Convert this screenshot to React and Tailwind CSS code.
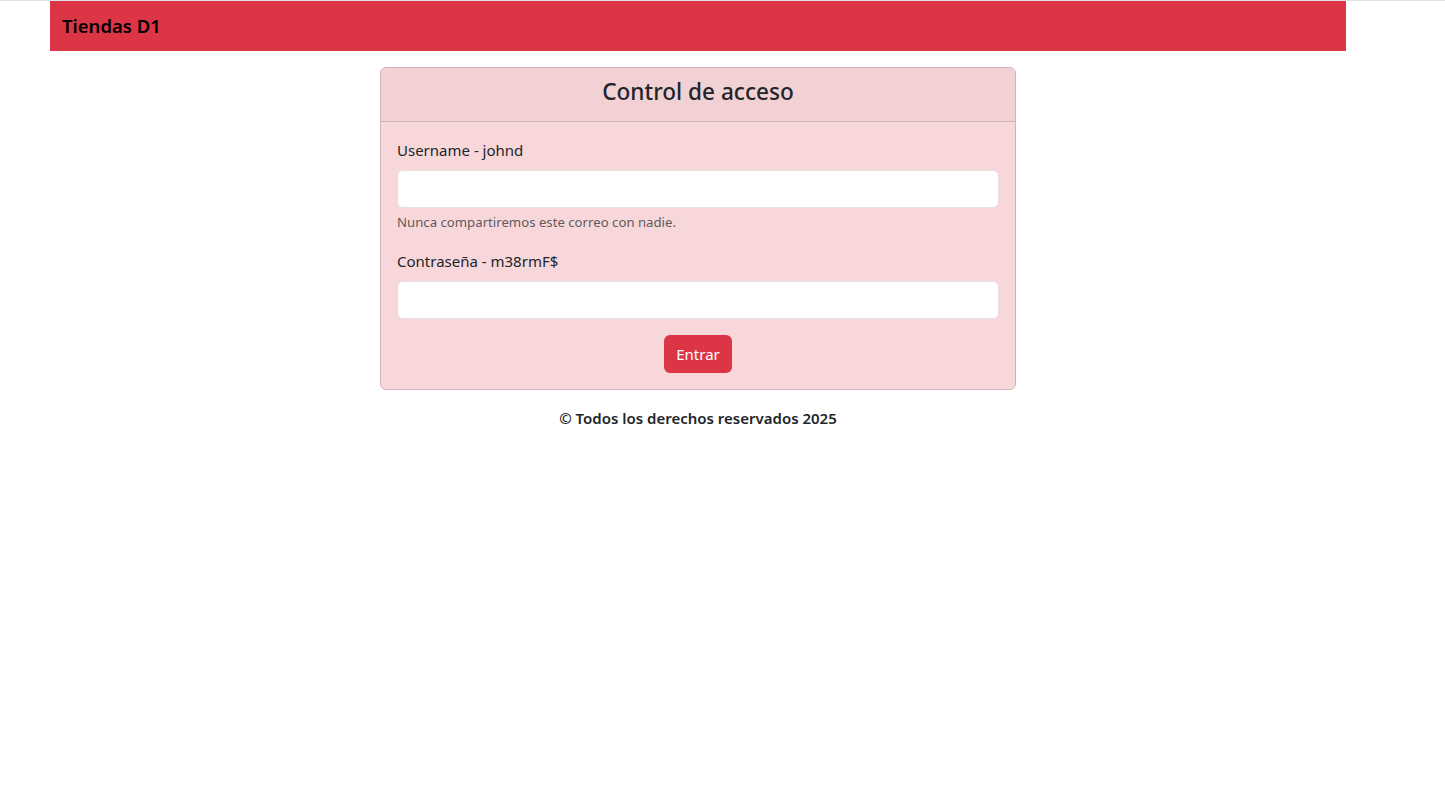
export default function App() {
  return (
    <div className="min-h-screen bg-white border-t border-[#dee2e6] font-['Noto_Sans',sans-serif] text-[#212529]">
      <nav className="ml-[50px] w-[1296px] h-[50px] bg-[#dc3545] flex items-center px-3">
        <span className="text-[18.5px] font-semibold text-black leading-none">Tiendas D1</span>
      </nav>
      <div className="ml-[380px] w-[636px] mt-4">
        <div className="rounded-[6px] border border-[#d2b3b6] bg-[#f8d7da] overflow-hidden">
          <div className="h-[54px] bg-[#f1d1d4] border-b border-[#d2b3b6] flex items-center justify-center pb-[4px]">
            <h4 className="text-[22.6px] font-medium leading-none">Control de acceso</h4>
          </div>
          <div className="px-4 pt-4 pb-4">
            <label className="block text-[15px] leading-6">Username - johnd</label>
            <input className="block mt-2 w-full h-[38px] rounded-[6px] bg-white border border-[#e8dfe0] outline-none" />
            <p className="text-[13.2px] leading-[21px] mt-[4px] text-[#5e5a5b]">Nunca compartiremos este correo con nadie.</p>
            <label className="block text-[15px] leading-6 mt-[16px]">Contraseña - m38rmF$</label>
            <input type="password" className="block mt-2 w-full h-[38px] rounded-[6px] bg-white border border-[#e8dfe0] outline-none" />
            <div className="flex justify-center mt-4">
              <button className="h-[38px] w-[68px] rounded-[6px] bg-[#dc3545] text-white text-[15px]">Entrar</button>
            </div>
          </div>
        </div>
        <p className="mt-4 text-center text-[15px] leading-6 font-semibold">© Todos los derechos reservados 2025</p>
      </div>
    </div>
  );
}
